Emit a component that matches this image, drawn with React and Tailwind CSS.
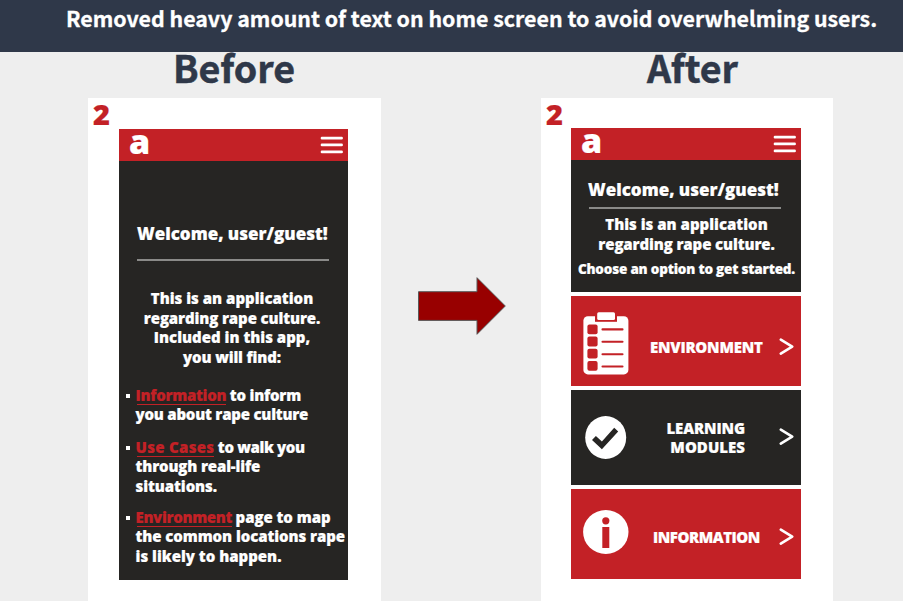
import React from "react";

function Menu() {
  return (
    <svg width="24" height="20" viewBox="0 0 24 20" fill="none" stroke="#fff" strokeWidth="2.7" strokeLinecap="round">
      <path d="M2 3.2H21.6M2 9.9H21.6M2 16.9H21.6" />
    </svg>
  );
}

function Chevron() {
  return (
    <svg width="16" height="18" viewBox="0 0 16 18" fill="none" stroke="#fff" strokeWidth="2.6" strokeLinecap="round" strokeLinejoin="round">
      <path d="M1.8 1.6L13.2 8.6L1.8 15.6" />
    </svg>
  );
}

function Clipboard() {
  return (
    <svg width="46" height="64" viewBox="0 0 46 64">
      <rect x="0.4" y="4.2" width="45" height="58.2" rx="4.5" fill="#fff" />
      <path d="M12 3H34V9.8H12Z" fill="#c32126" />
      <rect x="14.2" y="0.3" width="17.8" height="7.6" rx="1.5" fill="#fff" />
      <g fill="#c32126">
        <rect x="4.4" y="12.4" width="10.2" height="9.8" rx="2" />
        <rect x="4.4" y="24.6" width="10.2" height="9.8" rx="2" />
        <rect x="4.4" y="36.8" width="10.2" height="9.8" rx="2" />
        <rect x="4.4" y="49" width="10.2" height="9.8" rx="2" />
      </g>
      <path d="M19.5 17.4H39.5M19.5 29.8H39.5M19.5 42.2H39.5M19.5 54.5H39.5" stroke="#c32126" strokeWidth="2.1" strokeLinecap="round" />
    </svg>
  );
}

function Check() {
  return (
    <svg width="42" height="44" viewBox="0 0 42 44">
      <ellipse cx="20.7" cy="21.5" rx="20.5" ry="21.5" fill="#fff" />
      <path d="M7 23.9L10.9 20L16.9 25.4L29.2 11.8L33.2 15.4L16.9 33.3Z" fill="#262523" />
    </svg>
  );
}

function Info() {
  return (
    <svg width="46" height="44" viewBox="0 0 46 44">
      <ellipse cx="22.8" cy="22" rx="22.7" ry="21.9" fill="#fff" />
      <circle cx="22.8" cy="10.8" r="3.6" fill="#c32126" />
      <path d="M19.3 17H26.3V38H19.3Z" fill="#c32126" />
    </svg>
  );
}

function AppBar() {
  return (
    <div className="flex h-8 justify-between bg-[#c32126] pl-[10px] pr-1">
      <span className="text-[34px] leading-8 -mt-[4px]">a</span>
      <div className="mt-1.5">
        <Menu />
      </div>
    </div>
  );
}

function Card({ children }) {
  return <div className="flex h-[503px] flex-col bg-white [-webkit-text-stroke:0.2px]">{children}</div>;
}

function Item({ link, linkClass, rest, restClass, children }) {
  return (
    <li className="flex">
      <span className="mt-[8px] h-1 w-1 shrink-0 bg-white" />
      <div className="ml-[5.5px] whitespace-nowrap">
        <div className="flex">
          <span className={"relative text-[#c32126] " + linkClass}>
            {link}
            <span className="absolute bottom-[0.5px] left-px right-0 h-px bg-[#c32126]" />
          </span>
          <span className={"ml-[3.5px] " + restClass}>{rest}</span>
        </div>
        {children}
      </div>
    </li>
  );
}

export default function App() {
  return (
    <div className="h-[601px] w-[903px] overflow-hidden bg-[#eeeeee] font-['Open_Sans','Liberation_Sans',sans-serif] font-extrabold text-white">
      <header className="h-[52px] whitespace-nowrap bg-[#2f3849] pl-[66px] font-['Noto_Sans_CJK_SC','Open_Sans',sans-serif] text-[21.33px] font-bold leading-[36px] [-webkit-text-stroke:0.3px]">
        Removed heavy amount of text on home screen to avoid overwhelming users.
      </header>

      <main className="flex pl-[88px]">
        <section className="w-[293px]">
          <h2 className="h-[46px] pr-px text-center font-['Noto_Sans_CJK_SC','Open_Sans',sans-serif] text-[37.6px] font-bold leading-[30px] text-[#2f3849] [-webkit-text-stroke:0.5px]">
            Before
          </h2>
          <Card>
            <div className="h-[31px] pl-[5px] text-[29px] leading-[31px] text-[#c32126]">2</div>
            <div className="ml-[31px] h-[451px] w-[229px] bg-[#262523]">
              <AppBar />
              <div className="pl-[18px] pt-[61px] text-[17px] leading-6">Welcome, user/guest!</div>
              <div className="ml-[18px] mt-[13px] h-0.5 w-[192px] bg-[#8a8a88]" />
              <div className="mt-[28px] pr-[3px] text-center text-[15px] leading-[19.5px]">
                <div>This is an application</div>
                <div className="tracking-[-0.12px]">regarding rape culture.</div>
                <div>Included in this app,</div>
                <div className="tracking-[-0.15px]">you will find:</div>
              </div>
              <ul className="ml-[7px] mt-[18.5px] text-[15px] leading-[19.5px]">
                <Item link="Information" linkClass="tracking-[-0.28px]" rest="to inform" restClass="tracking-[-0.2px]">
                  <div className="tracking-[-0.22px]">you about rape culture</div>
                </Item>
                <li className="h-[13px]" />
                <Item link="Use Cases" linkClass="tracking-[0.3px]" rest="to walk you" restClass="tracking-[-0.35px]">
                  <div className="tracking-[-0.15px]">through real-life</div>
                  <div className="tracking-[-0.08px]">situations.</div>
                </Item>
                <li className="h-[11.5px]" />
                <Item link="Environment" linkClass="tracking-[-0.33px]" rest="page to map" restClass="tracking-[-0.06px]">
                  <div className="tracking-[-0.08px]">the common locations rape</div>
                  <div>is likely to happen.</div>
                </Item>
              </ul>
            </div>
          </Card>
        </section>

        <div className="w-[160px] pl-9 pt-[224px]">
          <svg width="90" height="60" viewBox="417 276 90 60">
            <path d="M418.5 291.7H477V277.7L505.3 306L477 334.3V320.4H418.5Z" fill="#980000" stroke="#595959" strokeWidth="1" />
          </svg>
        </div>

        <section className="w-[292px]">
          <h2 className="h-[46px] pl-[11px] text-center font-['Noto_Sans_CJK_SC','Open_Sans',sans-serif] text-[37.6px] font-bold leading-[29px] text-[#2f3849] [-webkit-text-stroke:0.5px]">
            After
          </h2>
          <Card>
            <div className="h-[30px] pl-[5px] text-[29px] leading-[31px] text-[#c32126]">2</div>
            <div className="ml-[30px] w-[230px]">
              <AppBar />
              <div className="h-[132px] bg-[#262523] pt-[18px]">
                <div className="pl-[17px] text-[17px] leading-6">Welcome, user/guest!</div>
                <div className="ml-[18px] mt-[5px] h-0.5 w-[192px] bg-[#8a8a88]" />
                <div className="mt-[6px] pl-px text-center text-[15px] leading-[19.5px]">
                  <div>This is an application</div>
                  <div className="tracking-[-0.12px]">regarding rape culture.</div>
                </div>
                <div className="mt-[6px] pl-px text-center text-[13.5px] leading-[18px] tracking-[-0.2px]">
                  Choose an option to get started.
                </div>
              </div>
              <div className="mt-1 flex h-[90px] bg-[#c32126] text-[15px]">
                <div className="w-[79px] pl-3 pt-4">
                  <Clipboard />
                </div>
                <div className="w-[129px] pt-[41px] leading-5 tracking-[-0.23px]">ENVIRONMENT</div>
                <div className="pt-[41.5px]">
                  <Chevron />
                </div>
              </div>
              <div className="mt-1 flex h-[94.5px] bg-[#262523] text-[15px] leading-[19.5px]">
                <div className="w-[78px] pl-[14px] pt-[26px]">
                  <Check />
                </div>
                <div className="w-[130px] pr-[34px] pt-[28.5px] text-right">
                  <div className="tracking-[-0.1px]">LEARNING</div>
                  <div className="tracking-[0.03px]">MODULES</div>
                </div>
                <div className="pt-[37.5px]">
                  <Chevron />
                </div>
              </div>
              <div className="mt-[4.5px] flex h-[90px] bg-[#c32126] text-[15px]">
                <div className="w-[82px] pl-3 pt-[21px]">
                  <Info />
                </div>
                <div className="w-[126px] pt-[38px] leading-5 tracking-[-0.45px]">INFORMATION</div>
                <div className="pt-[39px]">
                  <Chevron />
                </div>
              </div>
            </div>
          </Card>
        </section>
      </main>
    </div>
  );
}
